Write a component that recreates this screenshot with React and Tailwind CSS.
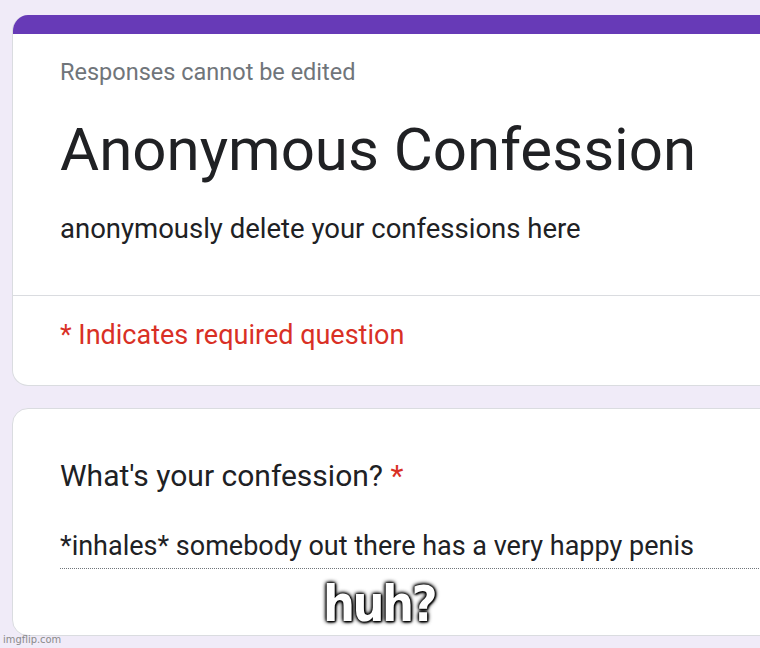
export default function App() {
  const roboto = { fontFamily: "Roboto, 'Liberation Sans', sans-serif" };
  return (
    <div className="relative w-[760px] h-[648px] overflow-hidden bg-[#f0ebf8] pt-[15px] pl-[12px]" style={roboto}>
      <div className="w-[820px] rounded-[16px] overflow-hidden bg-white border-x border-b border-[#dadce0]">
        <div className="h-[19px] bg-[#673ab7]" />
        <div className="pl-[47px] pt-[26px]">
          <div className="text-[23.5px] leading-[24px] text-[#70757a]">Responses cannot be edited</div>
          <div className="mt-[35px] text-[60px] leading-[62px] text-[#202124]">Anonymous Confession</div>
          <div className="mt-[34px] text-[27.5px] leading-[27px] text-[#202124]">anonymously delete your confessions here</div>
        </div>
        <div className="mt-[53px] border-t border-[#dadce0]" />
        <div className="pl-[47px] pt-[26px] pb-[36px] text-[27px] leading-[27px] text-[#d93025]">* Indicates required question</div>
      </div>

      <div className="mt-[22px] w-[820px] h-[228px] rounded-[16px] bg-white border border-[#dadce0] pl-[47px] pt-[52px]">
        <div className="text-[30px] leading-[30px] text-[#202124]">
          What's your confession? <span className="text-[#d93025]">*</span>
        </div>
        <div className="mt-[42px] pb-[8px] border-b border-dotted border-[#70757a] text-[27px] leading-[27px] text-[#202124]">
          *inhales* somebody out there has a very happy penis
        </div>
      </div>

      <div
        className="absolute left-[323px] top-[579px] text-[50px] leading-[50px] font-bold tracking-[-2.5px] text-white [text-shadow:0_0_2px_#000,0_0_3px_#000,0_0_4px_#000,0_0_5px_#000,1px_1px_2px_#000]"
        style={{ fontFamily: "'Liberation Sans Narrow', 'DejaVu Sans Condensed', 'Roboto Condensed', sans-serif" }}
      >
        huh?
      </div>

      <div
        className="absolute left-[3px] bottom-[2px] text-[11px] leading-[12px] text-[#8a8a8a]"
        style={{ fontFamily: "'Liberation Sans Narrow', 'DejaVu Sans Condensed', sans-serif" }}
      >
        imgflip.com
      </div>
    </div>
  );
}
